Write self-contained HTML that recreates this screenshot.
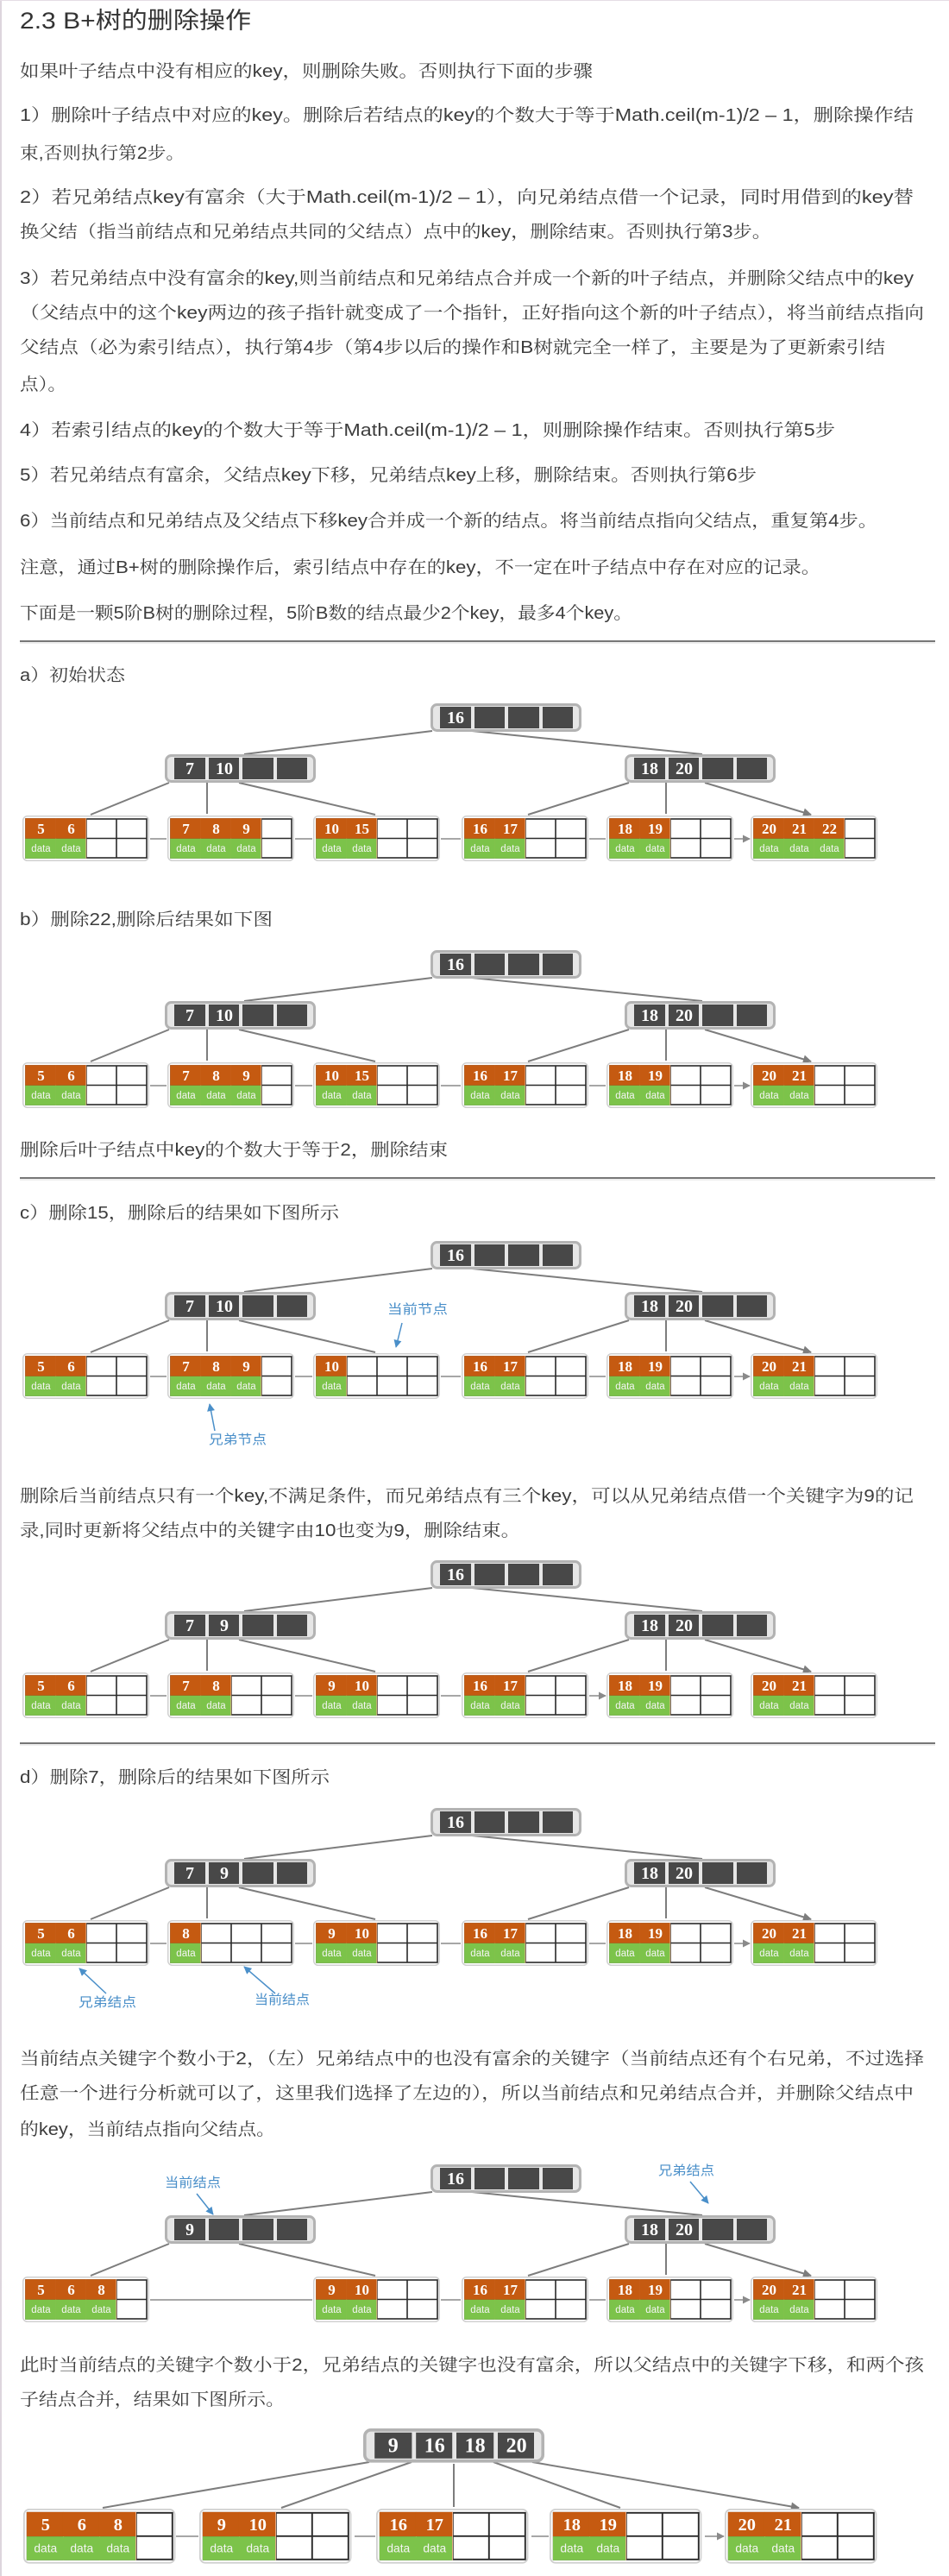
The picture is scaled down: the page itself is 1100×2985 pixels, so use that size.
<!DOCTYPE html>
<html><head><meta charset="utf-8"><style>
html,body{margin:0;padding:0;background:#fff;}
body{width:1100px;height:2985px;position:relative;overflow:hidden;}
svg{position:absolute;left:0;top:0;}
.t{font-family:"Liberation Sans","Noto Serif CJK SC",serif;font-size:20px;fill:#3c3c3c;}
.h{font-family:"Liberation Sans","Noto Sans CJK SC",sans-serif;font-size:27px;fill:#333;}
.m{font-family:"Liberation Serif",serif;font-weight:bold;font-size:20px;fill:#fff;text-anchor:middle;}
.n{font-family:"Liberation Serif",serif;font-weight:bold;font-size:17px;fill:#fff;text-anchor:middle;}
.d{font-family:"Liberation Sans",sans-serif;font-size:11.5px;fill:#f4f4f4;text-anchor:middle;}
.b{font-family:"Liberation Sans","Noto Sans CJK SC",sans-serif;font-size:15px;fill:#4a8fc9;}
.e{stroke:#7d7d7d;stroke-width:2;fill:none;marker-end:url(#ar);}
.la{stroke:#8a8a8a;stroke-width:1.5;fill:none;marker-end:url(#ar2);}
.bl{stroke:#4a8fc9;stroke-width:1.5;fill:none;marker-end:url(#ab);}
</style></head><body>
<svg width="1100" height="2985" viewBox="0 0 1100 2985" xmlns="http://www.w3.org/2000/svg">
<defs>
<marker id="ar" viewBox="0 0 10 10" refX="9" refY="5" markerWidth="12" markerHeight="10" markerUnits="userSpaceOnUse" orient="auto"><path d="M0,0L10,5L0,10z" fill="#7d7d7d"/></marker>
<marker id="ar2" viewBox="0 0 10 10" refX="9" refY="5" markerWidth="9" markerHeight="9" markerUnits="userSpaceOnUse" orient="auto"><path d="M0,0L10,5L0,10z" fill="#8a8a8a"/></marker>
<marker id="ab" viewBox="0 0 10 10" refX="9" refY="5" markerWidth="10" markerHeight="9" markerUnits="userSpaceOnUse" orient="auto"><path d="M0,0L10,5L0,10z" fill="#4a8fc9"/></marker>
<g id="lf"><rect x="0.75" y="0.75" width="145.5" height="51.5" rx="5" fill="#fff" stroke="#d0d0d0" stroke-width="1.5"/><rect x="4" y="4" width="140" height="45" fill="#fff" stroke="#2a2a2a" stroke-width="1.6"/><path d="M39 4V49M74 4V49M109 4V49M4 26.5H144" stroke="#2a2a2a" stroke-width="1.6"/></g>
<g id="k"><rect x="3.2" y="3.2" width="35.6" height="23.6" fill="#c55a11"/><rect x="3.2" y="26.8" width="35.6" height="23" fill="#7cc34a"/><path d="M38.8 3.2V49.8" stroke="#e9b08a" stroke-width="0.8"/></g>
<g id="in"><rect x="1.5" y="1.5" width="172" height="30" rx="6" fill="#e6e6e6" stroke="#b3b3b3" stroke-width="3"/><rect x="11" y="4" width="36" height="25" fill="#484848"/><rect x="51" y="4" width="35" height="25" fill="#484848"/><rect x="90" y="4" width="36" height="25" fill="#484848"/><rect x="130" y="4" width="35" height="25" fill="#484848"/></g>
</defs>

<rect x="0" y="0" width="2" height="2985" fill="#ddd5dd"/>
<rect x="0" y="0" width="1100" height="1" fill="#e5dde5"/>

<text class="h" x="23" y="33" textLength="268" lengthAdjust="spacingAndGlyphs">2.3 B+树的删除操作</text>
<text class="t" x="23" y="89" textLength="664" lengthAdjust="spacingAndGlyphs">如果叶子结点中没有相应的key，则删除失败。否则执行下面的步骤</text>
<text class="t" x="23" y="140" textLength="1036" lengthAdjust="spacingAndGlyphs">1）删除叶子结点中对应的key。删除后若结点的key的个数大于等于Math.ceil(m-1)/2 – 1，删除操作结</text>
<text class="t" x="23" y="184" textLength="191" lengthAdjust="spacingAndGlyphs">束,否则执行第2步。</text>
<text class="t" x="23" y="235" textLength="1036" lengthAdjust="spacingAndGlyphs">2）若兄弟结点key有富余（大于Math.ceil(m-1)/2 – 1），向兄弟结点借一个记录，同时用借到的key替</text>
<text class="t" x="23" y="275" textLength="871" lengthAdjust="spacingAndGlyphs">换父结（指当前结点和兄弟结点共同的父结点）点中的key，删除结束。否则执行第3步。</text>
<text class="t" x="23" y="329" textLength="1036" lengthAdjust="spacingAndGlyphs">3）若兄弟结点中没有富余的key,则当前结点和兄弟结点合并成一个新的叶子结点，并删除父结点中的key</text>
<text class="t" x="23" y="369" textLength="1048" lengthAdjust="spacingAndGlyphs">（父结点中的这个key两边的孩子指针就变成了一个指针，正好指向这个新的叶子结点），将当前结点指向</text>
<text class="t" x="23" y="409" textLength="1003" lengthAdjust="spacingAndGlyphs">父结点（必为索引结点），执行第4步（第4步以后的操作和B树就完全一样了，主要是为了更新索引结</text>
<text class="t" x="23" y="452" textLength="54" lengthAdjust="spacingAndGlyphs">点）。</text>
<text class="t" x="23" y="505" textLength="945" lengthAdjust="spacingAndGlyphs">4）若索引结点的key的个数大于等于Math.ceil(m-1)/2 – 1，则删除操作结束。否则执行第5步</text>
<text class="t" x="23" y="557" textLength="854" lengthAdjust="spacingAndGlyphs">5）若兄弟结点有富余，父结点key下移，兄弟结点key上移，删除结束。否则执行第6步</text>
<text class="t" x="23" y="610" textLength="994" lengthAdjust="spacingAndGlyphs">6）当前结点和兄弟结点及父结点下移key合并成一个新的结点。将当前结点指向父结点，重复第4步。</text>
<text class="t" x="23" y="664" textLength="928" lengthAdjust="spacingAndGlyphs">注意，通过B+树的删除操作后，索引结点中存在的key，不一定在叶子结点中存在对应的记录。</text>
<text class="t" x="23" y="717" textLength="710" lengthAdjust="spacingAndGlyphs">下面是一颗5阶B树的删除过程，5阶B数的结点最少2个key，最多4个key。</text>

<rect x="23" y="742" width="1061" height="2" fill="#777"/><rect x="23" y="744" width="1061" height="2" fill="#eee"/>
<text class="t" x="23" y="789" textLength="122" lengthAdjust="spacingAndGlyphs">a）初始状态</text>

<!-- Diagram a -->
<g>
<path class="e" d="M501 847L283 874M547 847L814 874M196 907L105 944M240 907V943M277 907L435 944M729 907L612 944M772 907V943M817 907L940 944"/>
<path class="la" d="M174 972H193M342 972H362M511 972H534M683 972H702M851 972H869"/>
<use href="#in" x="499" y="815"/><text class="m" x="528" y="838">16</text>
<use href="#in" x="191" y="874"/><text class="m" x="220" y="897">7</text><text class="m" x="260" y="897">10</text>
<use href="#in" x="724" y="874"/><text class="m" x="753" y="897">18</text><text class="m" x="793" y="897">20</text>
<g transform="translate(26,945)"><use href="#lf"/><use href="#k"/><use href="#k" x="35"/><text class="n" x="21.5" y="21">5</text><text class="n" x="56.5" y="21">6</text><text class="d" x="21.5" y="42">data</text><text class="d" x="56.5" y="42">data</text></g>
<g transform="translate(194,945)"><use href="#lf"/><use href="#k"/><use href="#k" x="35"/><use href="#k" x="70"/><text class="n" x="21.5" y="21">7</text><text class="n" x="56.5" y="21">8</text><text class="n" x="91.5" y="21">9</text><text class="d" x="21.5" y="42">data</text><text class="d" x="56.5" y="42">data</text><text class="d" x="91.5" y="42">data</text></g>
<g transform="translate(363,945)"><use href="#lf"/><use href="#k"/><use href="#k" x="35"/><text class="n" x="21.5" y="21">10</text><text class="n" x="56.5" y="21">15</text><text class="d" x="21.5" y="42">data</text><text class="d" x="56.5" y="42">data</text></g>
<g transform="translate(535,945)"><use href="#lf"/><use href="#k"/><use href="#k" x="35"/><text class="n" x="21.5" y="21">16</text><text class="n" x="56.5" y="21">17</text><text class="d" x="21.5" y="42">data</text><text class="d" x="56.5" y="42">data</text></g>
<g transform="translate(703,945)"><use href="#lf"/><use href="#k"/><use href="#k" x="35"/><text class="n" x="21.5" y="21">18</text><text class="n" x="56.5" y="21">19</text><text class="d" x="21.5" y="42">data</text><text class="d" x="56.5" y="42">data</text></g>
<g transform="translate(870,945)"><use href="#lf"/><use href="#k"/><use href="#k" x="35"/><use href="#k" x="70"/><text class="n" x="21.5" y="21">20</text><text class="n" x="56.5" y="21">21</text><text class="n" x="91.5" y="21">22</text><text class="d" x="21.5" y="42">data</text><text class="d" x="56.5" y="42">data</text><text class="d" x="91.5" y="42">data</text></g>
</g>

<text class="t" x="23" y="1072" textLength="293" lengthAdjust="spacingAndGlyphs">b）删除22,删除后结果如下图</text>

<!-- Diagram b -->
<g transform="translate(0,286)">
<path class="e" d="M501 847L283 874M547 847L814 874M196 907L105 944M240 907V943M277 907L435 944M729 907L612 944M772 907V943M817 907L940 944"/>
<path class="la" d="M174 972H193M342 972H362M511 972H534M683 972H702M851 972H869"/>
<use href="#in" x="499" y="815"/><text class="m" x="528" y="838">16</text>
<use href="#in" x="191" y="874"/><text class="m" x="220" y="897">7</text><text class="m" x="260" y="897">10</text>
<use href="#in" x="724" y="874"/><text class="m" x="753" y="897">18</text><text class="m" x="793" y="897">20</text>
<g transform="translate(26,945)"><use href="#lf"/><use href="#k"/><use href="#k" x="35"/><text class="n" x="21.5" y="21">5</text><text class="n" x="56.5" y="21">6</text><text class="d" x="21.5" y="42">data</text><text class="d" x="56.5" y="42">data</text></g>
<g transform="translate(194,945)"><use href="#lf"/><use href="#k"/><use href="#k" x="35"/><use href="#k" x="70"/><text class="n" x="21.5" y="21">7</text><text class="n" x="56.5" y="21">8</text><text class="n" x="91.5" y="21">9</text><text class="d" x="21.5" y="42">data</text><text class="d" x="56.5" y="42">data</text><text class="d" x="91.5" y="42">data</text></g>
<g transform="translate(363,945)"><use href="#lf"/><use href="#k"/><use href="#k" x="35"/><text class="n" x="21.5" y="21">10</text><text class="n" x="56.5" y="21">15</text><text class="d" x="21.5" y="42">data</text><text class="d" x="56.5" y="42">data</text></g>
<g transform="translate(535,945)"><use href="#lf"/><use href="#k"/><use href="#k" x="35"/><text class="n" x="21.5" y="21">16</text><text class="n" x="56.5" y="21">17</text><text class="d" x="21.5" y="42">data</text><text class="d" x="56.5" y="42">data</text></g>
<g transform="translate(703,945)"><use href="#lf"/><use href="#k"/><use href="#k" x="35"/><text class="n" x="21.5" y="21">18</text><text class="n" x="56.5" y="21">19</text><text class="d" x="21.5" y="42">data</text><text class="d" x="56.5" y="42">data</text></g>
<g transform="translate(870,945)"><use href="#lf"/><use href="#k"/><use href="#k" x="35"/><text class="n" x="21.5" y="21">20</text><text class="n" x="56.5" y="21">21</text><text class="d" x="21.5" y="42">data</text><text class="d" x="56.5" y="42">data</text></g>
</g>

<text class="t" x="23" y="1339" textLength="496" lengthAdjust="spacingAndGlyphs">删除后叶子结点中key的个数大于等于2，删除结束</text>
<rect x="23" y="1364" width="1061" height="2" fill="#777"/><rect x="23" y="1366" width="1061" height="2" fill="#eee"/>
<text class="t" x="23" y="1412" textLength="370" lengthAdjust="spacingAndGlyphs">c）删除15，删除后的结果如下图所示</text>

<!-- Diagram c -->
<g transform="translate(0,623)">
<path class="e" d="M501 847L283 874M547 847L814 874M196 907L105 944M240 907V943M277 907L435 944M729 907L612 944M772 907V943M817 907L940 944"/>
<path class="la" d="M174 972H193M342 972H362M511 972H534M683 972H702M851 972H869"/>
<use href="#in" x="499" y="815"/><text class="m" x="528" y="838">16</text>
<use href="#in" x="191" y="874"/><text class="m" x="220" y="897">7</text><text class="m" x="260" y="897">10</text>
<use href="#in" x="724" y="874"/><text class="m" x="753" y="897">18</text><text class="m" x="793" y="897">20</text>
<g transform="translate(26,945)"><use href="#lf"/><use href="#k"/><use href="#k" x="35"/><text class="n" x="21.5" y="21">5</text><text class="n" x="56.5" y="21">6</text><text class="d" x="21.5" y="42">data</text><text class="d" x="56.5" y="42">data</text></g>
<g transform="translate(194,945)"><use href="#lf"/><use href="#k"/><use href="#k" x="35"/><use href="#k" x="70"/><text class="n" x="21.5" y="21">7</text><text class="n" x="56.5" y="21">8</text><text class="n" x="91.5" y="21">9</text><text class="d" x="21.5" y="42">data</text><text class="d" x="56.5" y="42">data</text><text class="d" x="91.5" y="42">data</text></g>
<g transform="translate(363,945)"><use href="#lf"/><use href="#k"/><text class="n" x="21.5" y="21">10</text><text class="d" x="21.5" y="42">data</text></g>
<g transform="translate(535,945)"><use href="#lf"/><use href="#k"/><use href="#k" x="35"/><text class="n" x="21.5" y="21">16</text><text class="n" x="56.5" y="21">17</text><text class="d" x="21.5" y="42">data</text><text class="d" x="56.5" y="42">data</text></g>
<g transform="translate(703,945)"><use href="#lf"/><use href="#k"/><use href="#k" x="35"/><text class="n" x="21.5" y="21">18</text><text class="n" x="56.5" y="21">19</text><text class="d" x="21.5" y="42">data</text><text class="d" x="56.5" y="42">data</text></g>
<g transform="translate(870,945)"><use href="#lf"/><use href="#k"/><use href="#k" x="35"/><text class="n" x="21.5" y="21">20</text><text class="n" x="56.5" y="21">21</text><text class="d" x="21.5" y="42">data</text><text class="d" x="56.5" y="42">data</text></g>
</g>
<text class="b" x="449" y="1522" textLength="70" lengthAdjust="spacingAndGlyphs">当前节点</text>
<path class="bl" d="M466 1533L459 1561"/>
<text class="b" x="242" y="1673" textLength="67" lengthAdjust="spacingAndGlyphs">兄弟节点</text>
<path class="bl" d="M249 1658L243 1627"/>

<text class="t" x="23" y="1740" textLength="1036" lengthAdjust="spacingAndGlyphs">删除后当前结点只有一个key,不满足条件，而兄弟结点有三个key，可以从兄弟结点借一个关键字为9的记</text>
<text class="t" x="23" y="1780" textLength="580" lengthAdjust="spacingAndGlyphs">录,同时更新将父结点中的关键字由10也变为9，删除结束。</text>

<!-- Diagram c2 -->
<g transform="translate(0,993)">
<path class="e" d="M501 847L283 874M547 847L814 874M196 907L105 944M240 907V943M277 907L435 944M729 907L612 944M772 907V943M817 907L940 944"/>
<path class="la" d="M174 972H193M342 972H362M511 972H534M683 972H702"/>
<use href="#in" x="499" y="815"/><text class="m" x="528" y="838">16</text>
<use href="#in" x="191" y="874"/><text class="m" x="220" y="897">7</text><text class="m" x="260" y="897">9</text>
<use href="#in" x="724" y="874"/><text class="m" x="753" y="897">18</text><text class="m" x="793" y="897">20</text>
<g transform="translate(26,945)"><use href="#lf"/><use href="#k"/><use href="#k" x="35"/><text class="n" x="21.5" y="21">5</text><text class="n" x="56.5" y="21">6</text><text class="d" x="21.5" y="42">data</text><text class="d" x="56.5" y="42">data</text></g>
<g transform="translate(194,945)"><use href="#lf"/><use href="#k"/><use href="#k" x="35"/><text class="n" x="21.5" y="21">7</text><text class="n" x="56.5" y="21">8</text><text class="d" x="21.5" y="42">data</text><text class="d" x="56.5" y="42">data</text></g>
<g transform="translate(363,945)"><use href="#lf"/><use href="#k"/><use href="#k" x="35"/><text class="n" x="21.5" y="21">9</text><text class="n" x="56.5" y="21">10</text><text class="d" x="21.5" y="42">data</text><text class="d" x="56.5" y="42">data</text></g>
<g transform="translate(535,945)"><use href="#lf"/><use href="#k"/><use href="#k" x="35"/><text class="n" x="21.5" y="21">16</text><text class="n" x="56.5" y="21">17</text><text class="d" x="21.5" y="42">data</text><text class="d" x="56.5" y="42">data</text></g>
<g transform="translate(703,945)"><use href="#lf"/><use href="#k"/><use href="#k" x="35"/><text class="n" x="21.5" y="21">18</text><text class="n" x="56.5" y="21">19</text><text class="d" x="21.5" y="42">data</text><text class="d" x="56.5" y="42">data</text></g>
<g transform="translate(870,945)"><use href="#lf"/><use href="#k"/><use href="#k" x="35"/><text class="n" x="21.5" y="21">20</text><text class="n" x="56.5" y="21">21</text><text class="d" x="21.5" y="42">data</text><text class="d" x="56.5" y="42">data</text></g>
</g>

<rect x="23" y="2019" width="1061" height="2" fill="#777"/><rect x="23" y="2021" width="1061" height="2" fill="#eee"/>
<text class="t" x="23" y="2066" textLength="359" lengthAdjust="spacingAndGlyphs">d）删除7，删除后的结果如下图所示</text>

<!-- Diagram d1 -->
<g transform="translate(0,1280)">
<path class="e" d="M501 847L283 874M547 847L814 874M196 907L105 944M240 907V943M277 907L435 944M729 907L612 944M772 907V943M817 907L940 944"/>
<path class="la" d="M174 972H193M342 972H362M511 972H534M683 972H702M851 972H869"/>
<use href="#in" x="499" y="815"/><text class="m" x="528" y="838">16</text>
<use href="#in" x="191" y="874"/><text class="m" x="220" y="897">7</text><text class="m" x="260" y="897">9</text>
<use href="#in" x="724" y="874"/><text class="m" x="753" y="897">18</text><text class="m" x="793" y="897">20</text>
<g transform="translate(26,945)"><use href="#lf"/><use href="#k"/><use href="#k" x="35"/><text class="n" x="21.5" y="21">5</text><text class="n" x="56.5" y="21">6</text><text class="d" x="21.5" y="42">data</text><text class="d" x="56.5" y="42">data</text></g>
<g transform="translate(194,945)"><use href="#lf"/><use href="#k"/><text class="n" x="21.5" y="21">8</text><text class="d" x="21.5" y="42">data</text></g>
<g transform="translate(363,945)"><use href="#lf"/><use href="#k"/><use href="#k" x="35"/><text class="n" x="21.5" y="21">9</text><text class="n" x="56.5" y="21">10</text><text class="d" x="21.5" y="42">data</text><text class="d" x="56.5" y="42">data</text></g>
<g transform="translate(535,945)"><use href="#lf"/><use href="#k"/><use href="#k" x="35"/><text class="n" x="21.5" y="21">16</text><text class="n" x="56.5" y="21">17</text><text class="d" x="21.5" y="42">data</text><text class="d" x="56.5" y="42">data</text></g>
<g transform="translate(703,945)"><use href="#lf"/><use href="#k"/><use href="#k" x="35"/><text class="n" x="21.5" y="21">18</text><text class="n" x="56.5" y="21">19</text><text class="d" x="21.5" y="42">data</text><text class="d" x="56.5" y="42">data</text></g>
<g transform="translate(870,945)"><use href="#lf"/><use href="#k"/><use href="#k" x="35"/><text class="n" x="21.5" y="21">20</text><text class="n" x="56.5" y="21">21</text><text class="d" x="21.5" y="42">data</text><text class="d" x="56.5" y="42">data</text></g>
</g>
<text class="b" x="91" y="2325" textLength="67" lengthAdjust="spacingAndGlyphs">兄弟结点</text>
<path class="bl" d="M123 2310L92 2281"/>
<text class="b" x="295" y="2322" textLength="64" lengthAdjust="spacingAndGlyphs">当前结点</text>
<path class="bl" d="M319 2310L283 2279"/>

<text class="t" x="23" y="2392" textLength="1048" lengthAdjust="spacingAndGlyphs">当前结点关键字个数小于2，（左）兄弟结点中的也没有富余的关键字（当前结点还有个右兄弟，不过选择</text>
<text class="t" x="23" y="2432" textLength="1036" lengthAdjust="spacingAndGlyphs">任意一个进行分析就可以了，这里我们选择了左边的），所以当前结点和兄弟结点合并，并删除父结点中</text>
<text class="t" x="23" y="2474" textLength="296" lengthAdjust="spacingAndGlyphs">的key，当前结点指向父结点。</text>

<!-- Diagram d2 -->
<g transform="translate(0,1693)">
<path class="e" d="M501 847L283 874M547 847L814 874M196 907L105 944M277 907L435 944M729 907L612 944M772 907V943M817 907L940 944"/>
<path class="la" d="M174 972H362M511 972H534M683 972H702M851 972H869"/>
<use href="#in" x="499" y="815"/><text class="m" x="528" y="838">16</text>
<use href="#in" x="191" y="874"/><text class="m" x="220" y="897">9</text>
<use href="#in" x="724" y="874"/><text class="m" x="753" y="897">18</text><text class="m" x="793" y="897">20</text>
<g transform="translate(26,945)"><use href="#lf"/><use href="#k"/><use href="#k" x="35"/><use href="#k" x="70"/><text class="n" x="21.5" y="21">5</text><text class="n" x="56.5" y="21">6</text><text class="n" x="91.5" y="21">8</text><text class="d" x="21.5" y="42">data</text><text class="d" x="56.5" y="42">data</text><text class="d" x="91.5" y="42">data</text></g>
<g transform="translate(363,945)"><use href="#lf"/><use href="#k"/><use href="#k" x="35"/><text class="n" x="21.5" y="21">9</text><text class="n" x="56.5" y="21">10</text><text class="d" x="21.5" y="42">data</text><text class="d" x="56.5" y="42">data</text></g>
<g transform="translate(535,945)"><use href="#lf"/><use href="#k"/><use href="#k" x="35"/><text class="n" x="21.5" y="21">16</text><text class="n" x="56.5" y="21">17</text><text class="d" x="21.5" y="42">data</text><text class="d" x="56.5" y="42">data</text></g>
<g transform="translate(703,945)"><use href="#lf"/><use href="#k"/><use href="#k" x="35"/><text class="n" x="21.5" y="21">18</text><text class="n" x="56.5" y="21">19</text><text class="d" x="21.5" y="42">data</text><text class="d" x="56.5" y="42">data</text></g>
<g transform="translate(870,945)"><use href="#lf"/><use href="#k"/><use href="#k" x="35"/><text class="n" x="21.5" y="21">20</text><text class="n" x="56.5" y="21">21</text><text class="d" x="21.5" y="42">data</text><text class="d" x="56.5" y="42">data</text></g>
</g>
<text class="b" x="191" y="2534" textLength="65" lengthAdjust="spacingAndGlyphs">当前结点</text>
<path class="bl" d="M228 2542L247 2566"/>
<text class="b" x="763" y="2520" textLength="65" lengthAdjust="spacingAndGlyphs">兄弟结点</text>
<path class="bl" d="M800 2528L821 2553"/>

<text class="t" x="23" y="2747" textLength="1048" lengthAdjust="spacingAndGlyphs">此时当前结点的关键字个数小于2，兄弟结点的关键字也没有富余，所以父结点中的关键字下移，和两个孩</text>
<text class="t" x="23" y="2787" textLength="307" lengthAdjust="spacingAndGlyphs">子结点合并，结果如下图所示。</text>

<!-- Final diagram -->
<path class="e" d="M428 2853L119 2906M477 2853L326 2906M526 2855V2905M572 2853L719 2906M617 2853L926 2906"/>
<path class="la" d="M204 2939H230M411 2939H435M616 2939H636M817 2939H839"/>
<g transform="translate(421,2814) scale(1.2)"><use href="#in"/><text class="m" x="29" y="23">9</text><text class="m" x="69" y="23">16</text><text class="m" x="108" y="23">18</text><text class="m" x="148" y="23">20</text></g>
<g transform="translate(27,2907) scale(1.2)"><use href="#lf"/><use href="#k"/><use href="#k" x="35"/><use href="#k" x="70"/><text class="n" x="21.5" y="21">5</text><text class="n" x="56.5" y="21">6</text><text class="n" x="91.5" y="21">8</text><text class="d" x="21.5" y="42">data</text><text class="d" x="56.5" y="42">data</text><text class="d" x="91.5" y="42">data</text></g>
<g transform="translate(231,2907) scale(1.2)"><use href="#lf"/><use href="#k"/><use href="#k" x="35"/><text class="n" x="21.5" y="21">9</text><text class="n" x="56.5" y="21">10</text><text class="d" x="21.5" y="42">data</text><text class="d" x="56.5" y="42">data</text></g>
<g transform="translate(436,2907) scale(1.2)"><use href="#lf"/><use href="#k"/><use href="#k" x="35"/><text class="n" x="21.5" y="21">16</text><text class="n" x="56.5" y="21">17</text><text class="d" x="21.5" y="42">data</text><text class="d" x="56.5" y="42">data</text></g>
<g transform="translate(637,2907) scale(1.2)"><use href="#lf"/><use href="#k"/><use href="#k" x="35"/><text class="n" x="21.5" y="21">18</text><text class="n" x="56.5" y="21">19</text><text class="d" x="21.5" y="42">data</text><text class="d" x="56.5" y="42">data</text></g>
<g transform="translate(840,2907) scale(1.2)"><use href="#lf"/><use href="#k"/><use href="#k" x="35"/><text class="n" x="21.5" y="21">20</text><text class="n" x="56.5" y="21">21</text><text class="d" x="21.5" y="42">data</text><text class="d" x="56.5" y="42">data</text></g>
</svg>
</body></html>
